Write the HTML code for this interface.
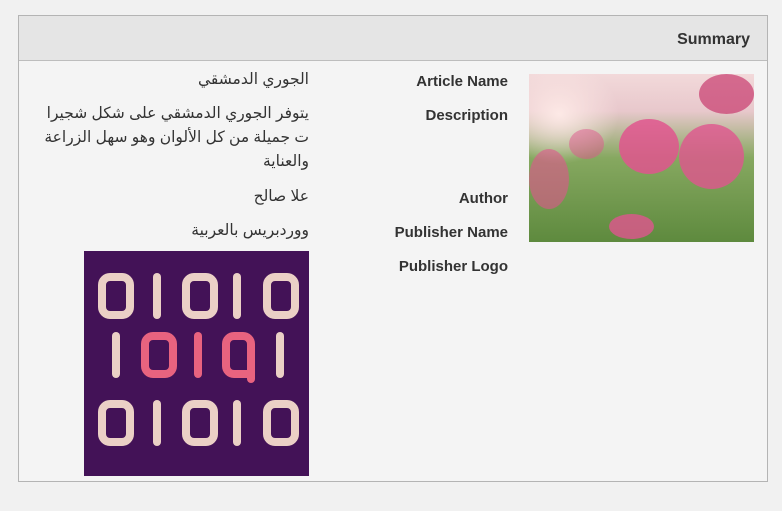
<!DOCTYPE html>
<html><head><meta charset="utf-8"><style>
body{margin:0;width:782px;height:511px;background:#f1f1f1;font-family:"Liberation Sans","Noto Sans CJK SC",sans-serif;color:#333;position:relative;overflow:hidden}
.box{position:absolute;left:18px;top:15px;width:748px;height:465px;border:1px solid #b4b4b4;background:#f4f4f4}
.hd{position:absolute;left:0;top:0;width:748px;height:44px;background:#e5e5e5;border-bottom:1px solid #bdbdbd}
.hd span{position:absolute;right:17px;top:15px;font-weight:bold;font-size:16px}
.l{position:absolute;right:259px;font-weight:bold;font-size:15px;white-space:nowrap}
.v{position:absolute;right:458px;font-size:15.5px;text-align:right;direction:rtl;line-height:24px;font-family:"Liberation Sans","DejaVu Sans",sans-serif}
.img{position:absolute;left:510px;top:58px;width:225px;height:168px;overflow:hidden;
background:radial-gradient(ellipse 60px 50px at 30px 40px,#fde9e6,transparent),linear-gradient(180deg,#f2d9da 0%,#e8c8cc 22%,#86a860 50%,#5e8a3e 100%)}
.img i{position:absolute;border-radius:50%;background:#e0558e}
</style></head><body>
<div class="box">
<div class="hd"><span>Summary</span></div>
<div class="l" style="top:57px">Article Name</div>
<div class="l" style="top:91px">Description</div>
<div class="l" style="top:174px">Author</div>
<div class="l" style="top:208px">Publisher Name</div>
<div class="l" style="top:242px">Publisher Logo</div>
<div class="v" style="top:52px">الجوري الدمشقي</div>
<div class="v" style="top:86px;width:272px">يتوفر الجوري الدمشقي على شكل شجيرا ت جميلة من كل الألوان وهو سهل الزراعة والعناية</div>
<div class="v" style="top:169px">علا صالح</div>
<div class="v" style="top:203px">ووردبريس بالعربية</div>
<div class="img">
<i style="left:90px;top:45px;width:60px;height:55px;opacity:.85"></i>
<i style="left:150px;top:50px;width:65px;height:65px;opacity:.8"></i>
<i style="left:0;top:75px;width:40px;height:60px;opacity:.6"></i>
<i style="left:80px;top:140px;width:45px;height:25px;opacity:.8"></i>
<i style="left:170px;top:0;width:55px;height:40px;opacity:.7;background:#c83a6e"></i>
<i style="left:40px;top:55px;width:35px;height:30px;opacity:.5"></i>
</div>
<svg style="position:absolute;left:65px;top:235px" width="225" height="225" viewBox="0 0 225 225">
<rect width="225" height="225" fill="#431257"/>
<g fill="none" stroke="#ebd0c6" stroke-width="8" stroke-linecap="round">
<rect x="18" y="26" width="28" height="38" rx="8"/><line x1="73" y1="26" x2="73" y2="64"/>
<rect x="102" y="26" width="28" height="38" rx="8"/><line x1="153" y1="26" x2="153" y2="64"/>
<rect x="183" y="26" width="28" height="38" rx="8"/>
<line x1="32" y1="85" x2="32" y2="123"/><line x1="196" y1="85" x2="196" y2="123"/>
<rect x="18" y="153" width="28" height="38" rx="8"/><line x1="73" y1="153" x2="73" y2="191"/>
<rect x="102" y="153" width="28" height="38" rx="8"/><line x1="153" y1="153" x2="153" y2="191"/>
<rect x="183" y="153" width="28" height="38" rx="8"/>
</g>
<g fill="none" stroke="#e8637f" stroke-width="8" stroke-linecap="round">
<rect x="61" y="85" width="28" height="38" rx="8"/><line x1="114" y1="85" x2="114" y2="123"/>
<path d="M167 123 H150 a8 8 0 0 1 -8 -8 V93 a8 8 0 0 1 8 -8 H159 a8 8 0 0 1 8 8 V128"/>
</g>
</svg>
</div>
</body></html>
